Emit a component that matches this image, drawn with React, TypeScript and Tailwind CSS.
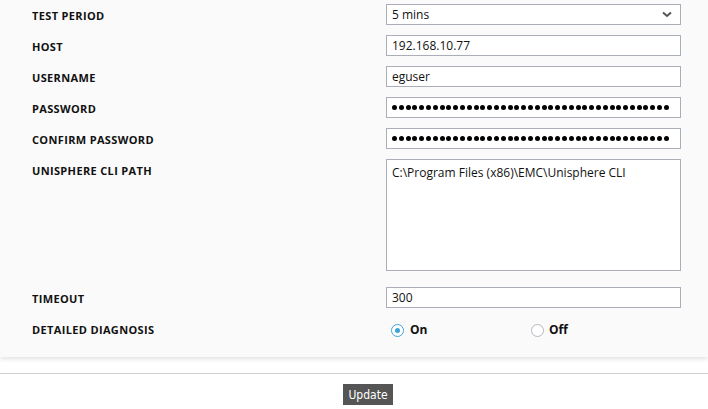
import { useState } from "react";

const font = { fontFamily: "'Open Sans', 'Liberation Sans', sans-serif" };

function Label({ children }: { children: string }) {
  return (
    <div className="h-[21px] flex items-center pl-8 pt-[3px] text-[11px] font-bold text-[#111] tracking-[0.35px]">
      {children}
    </div>
  );
}

const inputCls =
  "w-[295px] h-[21px] border border-[#a9aeb8] bg-white px-[5px] text-[12px] text-[#111] outline-none";

function Masked({ count }: { count: number }) {
  return (
    <div className={inputCls + " flex items-center gap-[1.8px]"} aria-label="password">
      {Array.from({ length: count }).map((_, i) => (
        <span key={i} className="w-[5px] h-[5px] rounded-full bg-black shrink-0" />
      ))}
    </div>
  );
}

function Radio({ checked }: { checked: boolean }) {
  return (
    <span
      className={
        "w-[13px] h-[13px] rounded-full border flex items-center justify-center bg-white " +
        (checked ? "border-[#3fa3d8]" : "border-[#b3b8c0]")
      }
    >
      {checked && <span className="w-[5px] h-[5px] rounded-full bg-[#3fa3d8]" />}
    </span>
  );
}

export default function App() {
  const [on, setOn] = useState(true);

  return (
    <div className="w-[708px] h-[409px] bg-white overflow-hidden" style={font}>
      {/* Form panel */}
      <div className="bg-[#fafafa] pt-[4px] pb-[18px] shadow-[0_2px_5px_rgba(0,0,0,0.12)] relative">
        <div className="grid grid-cols-[386px_295px] gap-y-[10px]">
          <Label>TEST PERIOD</Label>
          <div className={inputCls + " flex items-center justify-between pr-[8px]"}>
            <span>5 mins</span>
            <svg width="10" height="7" viewBox="0 0 10 7">
              <path d="M1 1.5 L5 5 L9 1.5" stroke="#555" strokeWidth="2" fill="none" />
            </svg>
          </div>

          <Label>HOST</Label>
          <input className={inputCls} defaultValue="192.168.10.77" readOnly />

          <Label>USERNAME</Label>
          <input className={inputCls} defaultValue="eguser" readOnly />

          <Label>PASSWORD</Label>
          <Masked count={41} />

          <Label>CONFIRM PASSWORD</Label>
          <Masked count={41} />

          <Label>UNISPHERE CLI PATH</Label>
          <textarea
            className={inputCls + " h-[112px] mb-[6px] pt-[5px] resize-none leading-[16px]"}
            defaultValue={"C:\\Program Files (x86)\\EMC\\Unisphere CLI"}
            readOnly
          />

          <Label>TIMEOUT</Label>
          <input className={inputCls} defaultValue="300" readOnly />

          <Label>DETAILED DIAGNOSIS</Label>
          <div className="h-[21px] flex items-center pt-[3px] text-[12px] font-bold text-[#111]">
            <button className="flex items-center gap-[6px] w-[145px] pl-[5px]" onClick={() => setOn(true)}>
              <Radio checked={on} />
              On
            </button>
            <button className="flex items-center gap-[5px]" onClick={() => setOn(false)}>
              <Radio checked={!on} />
              Off
            </button>
          </div>
        </div>
      </div>

      {/* Footer */}
      <div className="mt-[16px] border-t border-[#d0d0d0] flex justify-center pt-[10px] pl-[28px]">
        <button
          className="h-[21px] px-[5px] bg-[#555555] text-white text-[12px]"
          style={{ fontFamily: "'DejaVu Sans Condensed', 'Liberation Sans Narrow', sans-serif", fontStretch: "condensed" }}
        >
          Update
        </button>
      </div>
    </div>
  );
}
